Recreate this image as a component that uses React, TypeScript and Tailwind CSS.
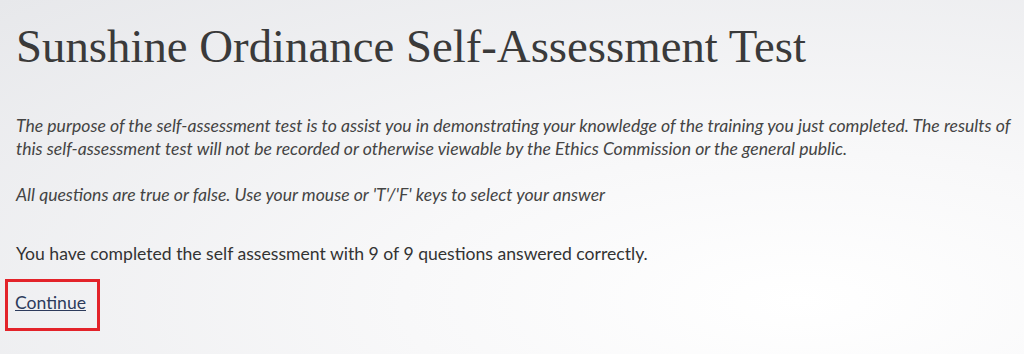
export default function App() {
  return (
    <div className="w-[1024px] h-[354px] overflow-hidden bg-[radial-gradient(ellipse_at_78%_85%,#ffffff_0%,#f8f8f9_35%,#e7e8eb_100%)] text-[#333] px-4 font-['Lato','Noto_Sans',sans-serif]">
      <h1 className="pt-[18px] text-[46.8px] leading-[56px] font-['Liberation_Serif',Georgia,serif] text-[#3a3a3a]">
        Sunshine Ordinance Self-Assessment Test
      </h1>
      <div className="mt-[40px] italic text-[17.6px] leading-[23px] text-[#444] whitespace-nowrap">
        <p>
          The purpose of the self-assessment test is to assist you in demonstrating your knowledge of the training you just completed. The results of
          <br />
          this self-assessment test will not be recorded or otherwise viewable by the Ethics Commission or the general public.
        </p>
        <p className="mt-[23px]">
          All questions are true or false. Use your mouse or 'T'/'F' keys to select your answer
        </p>
      </div>
      <p className="mt-[36px] text-[17.6px] leading-[24px] text-[#333]">
        You have completed the self assessment with 9 of 9 questions answered correctly.
      </p>
      <div className="mt-[13px] -ml-[11px] w-[95px] h-[52px] border-[3px] border-[#e3232a] flex items-center pl-[7px]">
        <a href="#" className="mb-[4px] text-[17.6px] leading-[24px] underline text-[#2d3b5c]">
          Continue
        </a>
      </div>
    </div>
  );
}
